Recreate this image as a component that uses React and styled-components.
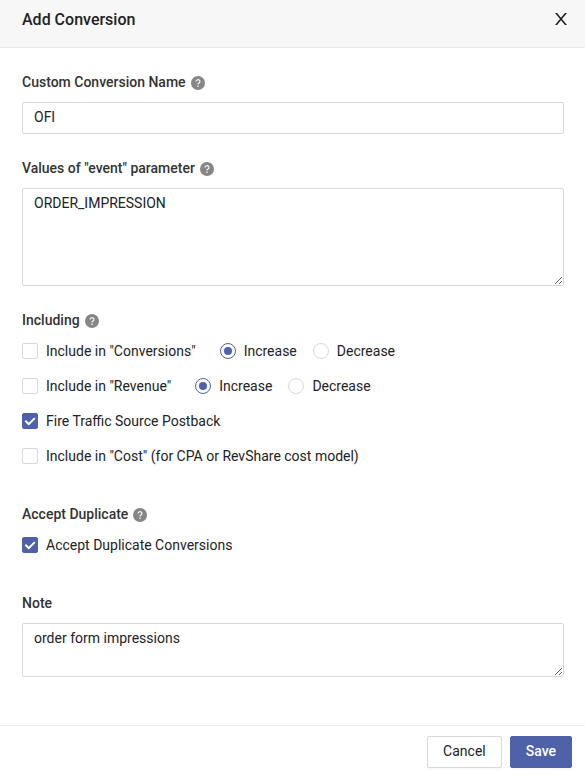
import { useState } from "react";
import styled, { createGlobalStyle } from "styled-components";

const GlobalStyle = createGlobalStyle`
  *, *::before, *::after {
    box-sizing: border-box;
  }

  body {
    margin: 0;
    background: #fff;
    color: #222226;
    font-family: Roboto, "Liberation Sans", sans-serif;
    font-size: 14px;
    line-height: 22px;
  }
`;

const Header = styled.header`
  display: flex;
  justify-content: space-between;
  align-items: flex-start;
  padding: 8px 16px 15px 22px;
  background: #f7f7f7;
  border-bottom: 1px solid #ebebeb;
`;

const Title = styled.h1`
  margin: 0;
  font-size: 16px;
  font-weight: 500;
  line-height: 24px;
`;

const CloseButton = styled.button`
  display: flex;
  align-items: center;
  justify-content: center;
  width: 16px;
  height: 22px;
  padding: 0;
  border: none;
  background: none;
  color: #222226;
  cursor: pointer;
`;

const Body = styled.div`
  display: flex;
  flex-direction: column;
  gap: 22px;
  padding: 22px 21px 48px 22px;
`;

const Field = styled.div`
  display: flex;
  flex-direction: column;
  gap: 8px;
`;

const FieldTitle = styled.div`
  display: flex;
  align-items: center;
  gap: 5px;
  font-weight: 500;
  line-height: 24px;
  color: #333;
`;

const TextInput = styled.input`
  width: 100%;
  height: 32px;
  padding: 3px 11px 5px;
  border: 1px solid #d9d9d9;
  border-radius: 2px;
  background: #fff;
  color: inherit;
  font: inherit;
  outline: none;

  &:focus {
    border-color: #4f62a9;
  }
`;

const TextArea = styled(TextInput).attrs({ as: "textarea" })`
  display: block;
  height: auto;
  resize: vertical;
`;

const Options = styled.div`
  display: flex;
  flex-direction: column;
  gap: 13px;
  padding-bottom: 13px;
`;

const OptionRow = styled.div`
  display: flex;
  align-items: center;
  gap: 24px;
`;

const RadioGroup = styled.div`
  display: flex;
  gap: 16px;
`;

const ChoiceLabel = styled.label`
  display: flex;
  align-items: center;
  gap: 8px;
  cursor: pointer;
`;

const CheckInput = styled.input`
  appearance: none;
  display: grid;
  place-content: center;
  width: 16px;
  height: 16px;
  margin: 0;
  border: 1px solid #d9d9d9;
  border-radius: 2px;
  background: #fff;
  cursor: pointer;

  &:checked {
    border-color: #4f62a9;
    background: #4f62a9;
  }

  &:checked::before {
    content: "";
    width: 12px;
    height: 12px;
    background: #fff;
    clip-path: polygon(5% 54%, 17% 42%, 40% 64%, 84% 20%, 96% 32%, 40% 88%);
  }
`;

const RadioInput = styled.input`
  appearance: none;
  display: grid;
  place-content: center;
  width: 16px;
  height: 16px;
  margin: 0;
  border: 1px solid #d9d9d9;
  border-radius: 50%;
  background: #fff;
  cursor: pointer;

  &:checked {
    border-color: #4f62a9;
  }

  &:checked::before {
    content: "";
    width: 8px;
    height: 8px;
    border-radius: 50%;
    background: #4f62a9;
  }
`;

const Footer = styled.footer`
  display: flex;
  justify-content: flex-end;
  gap: 8px;
  padding: 10px 13px 6px;
  border-top: 1px solid #ebebeb;
`;

const Button = styled.button`
  height: 32px;
  padding: 0 15px 2px;
  border: 1px solid ${({ $primary }) => ($primary ? "#4f62a9" : "#d9d9d9")};
  border-radius: 2px;
  background: ${({ $primary }) => ($primary ? "#4f62a9" : "#fff")};
  box-shadow: 0 2px 0 rgba(0, 0, 0, 0.02);
  color: ${({ $primary }) => ($primary ? "#fff" : "#222226")};
  font: inherit;
  font-weight: ${({ $primary }) => ($primary ? 500 : 400)};
  cursor: pointer;
`;

const HelpSvg = styled.svg`
  flex: none;
  margin-top: 2px;
`;

const HelpIcon = () => (
  <HelpSvg width="14" height="14" viewBox="0 0 14 14" aria-hidden="true">
    <circle cx="7" cy="7" r="7" fill="#868686" />
    <path d="M5 5.5a2 1.8 0 1 1 3 1.5c-.7.4-1 .7-1 1.4" fill="none" stroke="#fff" strokeWidth="1.1" />
    <circle cx="7" cy="10.3" r="0.8" fill="#fff" />
  </HelpSvg>
);

const CloseIcon = () => (
  <svg width="12" height="12" viewBox="0 0 12 12" aria-hidden="true">
    <path
      d="M0 0h2.1L6 4.8 9.9 0H12L7 6l5 6H9.9L6 7.2 2.1 12H0l5-6z"
      fill="currentColor"
    />
  </svg>
);

const Check = ({ label, ...props }) => (
  <ChoiceLabel>
    <CheckInput type="checkbox" {...props} />
    {label}
  </ChoiceLabel>
);

function Direction({ name }) {
  const [value, setValue] = useState("Increase");
  return (
    <RadioGroup role="radiogroup" aria-label={name}>
      {["Increase", "Decrease"].map((option) => (
        <ChoiceLabel key={option}>
          <RadioInput
            type="radio"
            name={name}
            checked={value === option}
            onChange={() => setValue(option)}
          />
          {option}
        </ChoiceLabel>
      ))}
    </RadioGroup>
  );
}

export default function App() {
  return (
    <form onSubmit={(e) => e.preventDefault()}>
      <GlobalStyle />
      <Header>
        <Title>Add Conversion</Title>
        <CloseButton type="button" aria-label="Close">
          <CloseIcon />
        </CloseButton>
      </Header>
      <Body>
        <Field>
          <FieldTitle>
            <label htmlFor="name">Custom Conversion Name</label>
            <HelpIcon />
          </FieldTitle>
          <TextInput id="name" type="text" defaultValue="OFI" />
        </Field>
        <Field>
          <FieldTitle>
            <label htmlFor="event">Values of "event" parameter</label>
            <HelpIcon />
          </FieldTitle>
          <TextArea id="event" rows={4} defaultValue="ORDER_IMPRESSION" />
        </Field>
        <Field role="group" aria-labelledby="including">
          <FieldTitle>
            <span id="including">Including</span>
            <HelpIcon />
          </FieldTitle>
          <Options>
            <OptionRow>
              <Check label={'Include in "Conversions"'} />
              <Direction name="conversions" />
            </OptionRow>
            <OptionRow>
              <Check label={'Include in "Revenue"'} />
              <Direction name="revenue" />
            </OptionRow>
            <OptionRow>
              <Check label="Fire Traffic Source Postback" defaultChecked />
            </OptionRow>
            <OptionRow>
              <Check label={'Include in "Cost" (for CPA or RevShare cost model)'} />
            </OptionRow>
          </Options>
        </Field>
        <Field role="group" aria-labelledby="duplicate">
          <FieldTitle>
            <span id="duplicate">Accept Duplicate</span>
            <HelpIcon />
          </FieldTitle>
          <Options>
            <OptionRow>
              <Check label="Accept Duplicate Conversions" defaultChecked />
            </OptionRow>
          </Options>
        </Field>
        <Field>
          <FieldTitle>
            <label htmlFor="note">Note</label>
          </FieldTitle>
          <TextArea id="note" rows={2} defaultValue="order form impressions" />
        </Field>
      </Body>
      <Footer>
        <Button type="button">Cancel</Button>
        <Button type="submit" $primary>Save</Button>
      </Footer>
    </form>
  );
}
